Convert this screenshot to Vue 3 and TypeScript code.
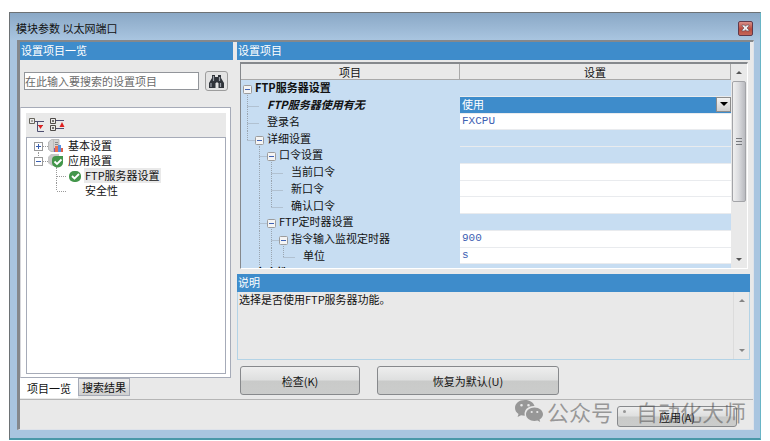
<script setup lang="ts">
import { ref } from 'vue'

type Kind = 'group' | 'text' | 'select'

interface Row {
  label: string
  level: number
  /** one character per ancestor column: | pass through, + branch, L last branch, space none */
  guides: string
  branch: boolean
  kind: Kind
  value?: string
  emphasis?: 'bold' | 'bold-italic'
}

const rows = ref<Row[]>([
  { label: 'FTP服务器设置', level: 0, guides: '', branch: true, kind: 'group', emphasis: 'bold' },
  { label: 'FTP服务器使用有无', level: 1, guides: '+', branch: false, kind: 'select', value: '使用', emphasis: 'bold-italic' },
  { label: '登录名', level: 1, guides: '+', branch: false, kind: 'text', value: 'FXCPU' },
  { label: '详细设置', level: 1, guides: 'L', branch: true, kind: 'group' },
  { label: '口令设置', level: 2, guides: ' +', branch: true, kind: 'group' },
  { label: '当前口令', level: 3, guides: ' |+', branch: false, kind: 'text', value: '' },
  { label: '新口令', level: 3, guides: ' |+', branch: false, kind: 'text', value: '' },
  { label: '确认口令', level: 3, guides: ' |L', branch: false, kind: 'text', value: '' },
  { label: 'FTP定时器设置', level: 2, guides: ' +', branch: true, kind: 'group' },
  { label: '指令输入监视定时器', level: 3, guides: ' |+', branch: true, kind: 'text', value: '900' },
  { label: '单位', level: 4, guides: ' ||L', branch: false, kind: 'text', value: 's' },
  { label: '安全性', level: 0, guides: '', branch: true, kind: 'group', emphasis: 'bold' },
])

const keyword = ref('')

function guidePath(row: Row): string {
  let d = ''
  for (let i = 0; i < row.guides.length; i++) {
    const x = i * 12 + 6.5
    const g = row.guides[i]
    if (g === '|' || g === '+') d += `M${x} 0V17`
    if (g === 'L') d += `M${x} 0V9`
    if (g === '+' || g === 'L') d += `M${x} 9.5H${x + (row.branch ? 8 : 12)}`
  }
  if (row.branch) d += `M${row.level * 12 + 6.5} 13V17`
  return d
}
</script>

<template>
  <div class="stage">
    <section class="window">
      <header class="titlebar">
        <h1>模块参数 以太网端口</h1>
        <button class="close" type="button" aria-label="关闭">
          <svg width="9" height="8" viewBox="0 0 9 8"><path d="M1 1h2.500l1 1.300L5.500 1H8v1L6 4l2 2v1H5.500l-1-1.300L3.500 7H1V6l2-2-2-2z" fill="#eee" stroke="#6b5360" stroke-width=".7" /></svg>
        </button>
      </header>

      <main class="client">
        <div class="panes">
          <aside class="left">
            <h2 class="bar">设置项目一览</h2>
            <div class="search">
              <input v-model="keyword" type="text" aria-label="搜索设置项目" placeholder="在此输入要搜索的设置项目" />
              <button type="button" aria-label="搜索">
                <svg width="17" height="15" viewBox="0 0 17 15">
                  <path d="M4 1h3v2h3V1h3v3l3 5v5h-5.500V9h-1V8h-1v1h-1v5H1V9l3-5z" fill="#30343a" />
                  <path d="M3 9v4M5.500 2v5M12.500 9v4M11.500 3v4" stroke="#9aa0a8" stroke-width="1.200" />
                </svg>
              </button>
            </div>
            <div class="sheet">
              <div class="tools">
                <button type="button" aria-label="全部折叠">
                  <svg width="16" height="16" viewBox="0 0 16 16" fill="none">
                    <path d="M.5 1.500h5v5h-5zM2 4h2" stroke="#66645c" />
                    <path d="M6 4.500h9M8.500 4v10.500H15M9 8.500h5" stroke="#4e4e70" />
                    <path d="M9 8h5l-2.500 4z" fill="#e02020" />
                  </svg>
                </button>
                <button type="button" aria-label="全部展开">
                  <svg width="16" height="16" viewBox="0 0 16 16" fill="none">
                    <path d="M.5 1.500h5v5h-5zM.5 8.500h5v5h-5zM2 4h2M3 3v2M2 11h2M3 10v2" stroke="#4e4b48" />
                    <path d="M6 3.500h8M6 11.500h8" stroke="#4e4e70" />
                    <path d="M9.500 10h5L12 5z" fill="#e02020" />
                  </svg>
                </button>
              </div>
              <ul class="tree">
                <li>
                  <svg width="40" height="15" viewBox="0 0 40 15" fill="none">
                    <path d="M11.500 12v3M16 8.500h6" stroke="#999" stroke-dasharray="1 1" />
                    <rect x="7.500" y="4.500" width="8" height="8" fill="#fff" stroke="#9a9a9a" />
                    <path d="M9 8.500h5M11.500 6v5" stroke="#3a5fb0" />
                    <path d="M21.500 4l3-2.500H32v12h-8l-2.500-2z" fill="#d2d2d2" stroke="#a8a8a8" stroke-width=".7" />
                    <path d="M26.500 1.500v12" stroke="#b5b5b5" stroke-width=".7" />
                    <path d="M28 4.500h3M28 6.500h3" stroke="#888" />
                    <path d="M28 8h3v6h-3z" fill="#ec7050" /><path d="M31 7h3v7h-3z" fill="#5a8fe0" /><path d="M34 10h2v4h-2z" fill="#e06048" />
                    <path d="M27 10h1v4h-1z" fill="#8058b0" />
                  </svg>
                  <span>基本设置</span>
                </li>
                <li>
                  <svg width="40" height="15" viewBox="0 0 40 15" fill="none">
                    <path d="M11.500 0v4M16 8.500h6M29.500 14v1" stroke="#999" stroke-dasharray="1 1" />
                    <rect x="7.500" y="4.500" width="8" height="8" fill="#fff" stroke="#9a9a9a" />
                    <path d="M9 8.500h5" stroke="#3a5fb0" />
                    <path d="M21 4l3-3h8v12h-7l-4-3z" fill="#c7c7c7" />
                    <path d="M29 3h7v6.500a5 5 0 0 1-5 5h-1a5 5 0 0 1-5-5V7a4 4 0 0 1 4-4z" fill="#43964b" />
                    <path d="M27.500 8.500L30 11l4.500-4.500" stroke="#fff" stroke-width="1.800" />
                  </svg>
                  <span>应用设置</span>
                </li>
                <li>
                  <svg width="57" height="15" viewBox="0 0 57 15" fill="none">
                    <path d="M29.500 0v15M30 8.500h10" stroke="#999" stroke-dasharray="1 1" />
                    <rect x="42" y="3" width="12" height="11" rx="5" fill="#43964b" />
                    <path d="M45 8l2.500 2.500L52 6" stroke="#fff" stroke-width="1.800" />
                  </svg>
                  <span class="picked">FTP服务器设置</span>
                </li>
                <li>
                  <svg width="57" height="15" viewBox="0 0 57 15" fill="none">
                    <path d="M29.500 0v8M30 8.500h10" stroke="#999" stroke-dasharray="1 1" />
                  </svg>
                  <span>安全性</span>
                </li>
              </ul>
            </div>
            <nav class="tabs">
              <button type="button" class="tab current">项目一览</button>
              <button type="button" class="tab">搜索结果</button>
            </nav>
          </aside>

          <section class="right">
            <h2 class="bar">设置项目</h2>
            <div class="grid">
              <div class="viewport">
                <table>
                  <thead>
                    <tr><th class="name">项目</th><th>设置</th></tr>
                  </thead>
                  <tbody>
                    <tr v-for="(row, i) in rows" :key="i">
                      <td class="name">
                        <div class="item">
                          <svg :width="row.level * 12 + 14" height="16">
                            <path :d="guidePath(row)" fill="none" stroke="#9aa5b0" stroke-dasharray="1 1" />
                            <g v-if="row.branch">
                              <rect :x="row.level * 12 + 2.5" y="5.5" width="8" height="8" rx="1" fill="#f4f4f4" stroke="#9c9c9c" />
                              <path :d="`M${row.level * 12 + 4} 9.5h5`" stroke="#3f62b5" />
                            </g>
                          </svg>
                          <label :for="`f${i}`" :class="row.emphasis">{{ row.label }}</label>
                        </div>
                      </td>
                      <td :class="['cell', row.kind]">
                        <div v-if="row.kind === 'select'" class="combo">
                          <select :id="`f${i}`" v-model="row.value">
                            <option>使用</option>
                            <option>不使用</option>
                          </select>
                          <span class="drop"><svg width="8" height="4" viewBox="0 0 8 4"><path d="M0 0h8L4 4z" fill="#000" /></svg></span>
                        </div>
                        <input v-else-if="row.kind === 'text'" :id="`f${i}`" v-model="row.value" type="text" />
                      </td>
                    </tr>
                  </tbody>
                </table>
              </div>
              <div class="scroll">
                <svg class="arrow" width="6" height="3" viewBox="0 0 6 3"><path d="M0 3h6L3 0z" fill="#555" /></svg>
                <div class="thumb"><i></i><i></i><i></i></div>
                <svg class="arrow" width="6" height="3" viewBox="0 0 6 3"><path d="M0 0h6L3 3z" fill="#555" /></svg>
              </div>
            </div>
            <h2 class="bar">说明</h2>
            <div class="note">
              <p>选择是否使用FTP服务器功能。</p>
              <div class="scroll idle">
                <svg class="arrow" width="6" height="3" viewBox="0 0 6 3"><path d="M0 3h6L3 0z" fill="#858585" /></svg>
                <svg class="arrow" width="6" height="3" viewBox="0 0 6 3"><path d="M0 0h6L3 3z" fill="#858585" /></svg>
              </div>
            </div>
            <div class="actions">
              <button type="button" class="push check">检查(K)</button>
              <button type="button" class="push restore">恢复为默认(U)</button>
            </div>
          </section>
        </div>
        <footer class="foot">
          <button type="button" class="push apply">应用(A)</button>
        </footer>
      </main>
    </section>

    <div class="mark">
      <svg width="30" height="24" viewBox="0 0 30 24">
        <path fill-rule="evenodd" d="M11 1C5 1 1 4.500 1 9c0 2.600 1.400 4.600 3.500 6l-.9 3 3.400-1.800c1.200.3 2.400.5 3.800.5C9.500 11 14 6.600 20.500 7 19.500 3.500 15.800 1 11 1zM7.500 5a1.300 1.300 0 1 1 0 2.600 1.300 1.300 0 0 1 0-2.600zm7 0a1.300 1.300 0 1 1 0 2.600 1.300 1.300 0 0 1 0-2.600z" />
        <path fill-rule="evenodd" d="M20.500 8.500c-4.800 0-8.500 3-8.500 6.800s3.700 6.700 8.500 6.700c1 0 2-.2 3-.5l2.700 1.500-.7-2.400c2-1.300 3.500-3.200 3.500-5.300 0-3.800-3.700-6.800-8.500-6.800zm-2.800 3.400a1.100 1.100 0 1 1 0 2.200 1.100 1.100 0 0 1 0-2.200zm5.600 0a1.100 1.100 0 1 1 0 2.200 1.100 1.100 0 0 1 0-2.200z" />
      </svg>
      <span>公众号</span><i></i><span>自动化大师</span>
    </div>
  </div>
</template>

<style>
body {
  background: #fff;
}
</style>

<style scoped>
* {
  box-sizing: border-box;
}
.stage {
  position: relative;
  display: flex;
  height: 100vh;
  padding: 12px 9px 1px;
  font: 11px/15px "Noto Sans CJK SC", sans-serif;
  color: #111;
}
button, input, select {
  font: inherit;
  color: inherit;
  margin: 0;
}
h1, h2, p, ul {
  margin: 0;
  padding: 0;
  font-size: 11px;
  font-weight: 400;
}
svg {
  display: block;
  flex: none;
}
.window {
  flex: 1;
  display: flex;
  flex-direction: column;
  min-width: 0;
  padding: 0 6px 8px 7px;
  border: 1px solid #6d7275;
  border-right-color: #69b5c6;
  border-bottom: 2px solid #4b98a9;
  background: linear-gradient(#8aa8c6, #a9c5e0 27px);
}
.titlebar {
  display: flex;
  justify-content: space-between;
  align-items: center;
  height: 27px;
  padding: 3px 1px 0 0;
}
.titlebar h1 {
  margin-left: -1px;
}
.close {
  display: grid;
  place-items: center;
  width: 15px;
  height: 15px;
  padding: 0;
  border: 1px solid #61394a;
  border-radius: 2px;
  background: linear-gradient(#d9908a, #b94a3c 55%, #c4675b);
}
.client {
  flex: 1;
  min-height: 0;
  display: flex;
  flex-direction: column;
  border: 1px solid #8b8f95;
  border-width: 2px 1px 1px 3px;
  border-color: #85888c #dfe3ea #dfe3ea #85888c;
  background: #e9e9e9;
}
.panes {
  flex: 1;
  min-height: 0;
  display: grid;
  grid-template-columns: 213px minmax(0, 1fr);
  column-gap: 4px;
  padding-right: 3px;
  border-bottom: 1px solid #b5b5b5;
}
.bar {
  height: 18px;
  padding-left: 1px;
  line-height: 17px;
  background: #3e8ccb;
  color: #fff;
}
.left, .right {
  display: flex;
  flex-direction: column;
  min-height: 0;
}
.search {
  display: flex;
  align-items: center;
  gap: 6px;
  padding: 11px 5px 16px 4px;
}
.search input {
  flex: 1;
  min-width: 0;
  height: 18px;
  padding: 0 0 1px;
  border: 1px solid #92959a;
  background: #fff;
}
.search input::placeholder {
  color: #6b6b6b;
  opacity: 1;
}
.search button {
  display: grid;
  place-items: center;
  width: 23px;
  height: 20px;
  padding: 0;
  border: 1px solid #9d9d9d;
  border-radius: 3px;
  background: #e3e3e3;
}
.sheet {
  flex: 1;
  min-height: 0;
  display: flex;
  flex-direction: column;
  margin-right: 2px;
  padding: 5px 4px 3px 5px;
  border: 1px solid #a6abb8;
  border-left-color: #d8d8dc;
  background: #fff;
}
.tools {
  display: flex;
  gap: 5px;
  height: 24px;
  padding: 4px 3px;
  background: #e9e9e9;
}
.tools button {
  padding: 0;
  border: 0;
  background: none;
}
.tree {
  flex: 1;
  border: 1px solid #a6abb8;
  list-style: none;
}
.tree li {
  display: flex;
  height: 15px;
}
.tree span {
  padding: 0 1px;
}
.picked {
  background: #e9e9e9;
}
.tabs {
  display: flex;
  align-items: flex-start;
  height: 21px;
}
.tab {
  height: 18px;
  padding: 0 3px;
  border: 1px solid #a6abb8;
  line-height: 14px;
  background: linear-gradient(#ececec, #cfcfcf);
}
.tab.current {
  height: 20px;
  padding: 0 6px;
  border-color: #fff;
  line-height: 18px;
  background: #fff;
}
.grid {
  flex: 1;
  min-height: 0;
  display: flex;
  margin: 2px 2px 5px 3px;
  border: 1px solid #85888c;
  border-top-width: 2px;
  border-right-color: #fff;
  border-bottom-color: #fff;
}
.viewport {
  flex: 1;
  min-width: 0;
  overflow: hidden;
  background: #c7ddf2;
}
table {
  width: 100%;
  height: 217px;
  table-layout: fixed;
  border-collapse: separate;
  border-spacing: 0;
}
th, td {
  padding: 0;
  height: 16px;
}
th {
  border: 1px solid #a9a9a9;
  border-width: 0 1px 1px 0;
  font-weight: 400;
  line-height: 14px;
  background: #e9e9e9;
}
.name {
  width: 219px;
}
.item {
  display: flex;
  height: 16px;
}
.item svg {
  overflow: visible;
}
.item label {
  line-height: 14px;
  white-space: nowrap;
}
.bold, .bold-italic {
  font-weight: 700;
}
.bold-italic {
  font-style: italic;
}
.cell {
  border-bottom: 1px solid #e9ebee;
  color: #3d60b2;
  vertical-align: top;
}
.cell.text {
  background: #fff;
}
.cell.select {
  background: #3e8ccb;
  color: #fff;
}
.cell input, .cell select {
  display: block;
  flex: 1;
  width: 100%;
  min-width: 0;
  height: 15px;
  padding: 0 2px;
  border: 0;
  line-height: 15px;
  background: none;
  appearance: none;
  outline: 0;
}
.cell input {
  font-family: "Liberation Mono", "Noto Sans CJK SC", monospace;
}
.combo {
  display: flex;
}
.drop {
  display: grid;
  place-items: center;
  width: 15px;
  height: 15px;
  border: 1px solid #8c8c8c;
  background: linear-gradient(#f3f3f3, #cfcfcf);
  pointer-events: none;
}
.scroll {
  display: flex;
  flex-direction: column;
  align-items: center;
  width: 16px;
  padding: 7px 1px;
  background: #e9e9e9;
}
.scroll .arrow:last-child {
  margin-top: auto;
}
.thumb {
  display: flex;
  flex-direction: column;
  align-items: center;
  justify-content: center;
  gap: 2px;
  width: 14px;
  height: 121px;
  margin-top: 7px;
  border: 1px solid #a3a4a8;
  border-radius: 2px;
  background: linear-gradient(90deg, #f0f0f0, #dcdde0 45%, #b9babf);
}
.thumb i {
  width: 6px;
  height: 1px;
  background: #77797d;
}
.note {
  display: flex;
  justify-content: space-between;
  height: 68px;
  border: 1px solid #b3d3e6;
  border-top: 0;
}
.note p {
  padding-left: 1px;
}
.idle {
  border-left: 1px solid #dcdcdc;
}
.actions {
  display: flex;
  gap: 17px;
  padding: 6px 3px 4px;
}
.push {
  height: 29px;
  padding: 0;
  border: 1px solid #87898c;
  border-radius: 3px;
  line-height: 26px;
  background: linear-gradient(#eeeeee, #dedfdf 48%, #c9cac9 52%, #cbcccb);
}
.check {
  width: 120px;
}
.restore {
  width: 182px;
}
.foot {
  display: flex;
  justify-content: flex-end;
  padding: 6px 16px 2px;
}
.apply {
  width: 120px;
  height: 21px;
  line-height: 18px;
}
.mark {
  position: absolute;
  right: 24px;
  bottom: 14px;
  display: flex;
  align-items: center;
  font-size: 22px;
  line-height: 32px;
  color: rgba(70, 70, 70, 0.5);
  pointer-events: none;
}
.mark svg {
  margin-right: 3px;
  fill: currentColor;
}
.mark i {
  width: 3px;
  height: 3px;
  margin: 0 10px;
  border-radius: 50%;
  background: currentColor;
}
</style>
